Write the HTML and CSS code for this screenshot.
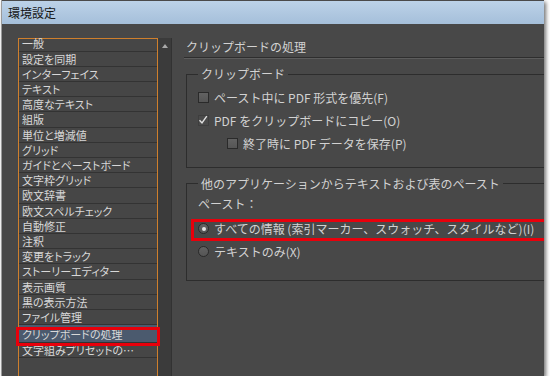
FILE: index.html
```html
<!DOCTYPE html>
<html lang="ja">
<head>
    <meta charset="UTF-8">
    <title>環境設定</title>
    <link rel="stylesheet" href="styles.css">
</head>
<body>

<div class="window">
    <div class="titlebar">環境設定</div>
    <div class="content">
        <div class="side">
            <div class="list">
                <ul>
                    <li>一般</li>
                    <li>設定を同期</li>
                    <li>インターフェイス</li>
                    <li>テキスト</li>
                    <li>高度なテキスト</li>
                    <li>組版</li>
                    <li>単位と増減値</li>
                    <li>グリッド</li>
                    <li>ガイドとペーストボード</li>
                    <li>文字枠グリッド</li>
                    <li>欧文辞書</li>
                    <li>欧文スペルチェック</li>
                    <li>自動修正</li>
                    <li>注釈</li>
                    <li>変更をトラック</li>
                    <li>ストーリーエディター</li>
                    <li>表示画質</li>
                    <li>黒の表示方法</li>
                    <li>ファイル管理</li>
                    <li class="sel">クリップボードの処理</li>
                    <li>文字組みプリセットの…</li>
                </ul>
            </div>
            <div class="scroll"><span class="arrow"></span></div>
        </div>

        <div class="main">
            <h1>クリップボードの処理</h1>

            <fieldset class="group first">
                <legend>クリップボード</legend>
                <div class="row"><span class="box"></span>ペースト中に PDF 形式を優先(F)</div>
                <div class="row"><span class="box checked"><svg width="10" height="10" viewBox="0 0 10 10"><path d="M1.5 5.2 L4 8 L8.8 1.2" fill="none" stroke="#e0e0e0" stroke-width="1.4"/></svg></span>PDF をクリップボードにコピー(O)</div>
                <div class="row indent"><span class="box"></span>終了時に PDF データを保存(P)</div>
            </fieldset>

            <fieldset class="group second">
                <legend>他のアプリケーションからテキストおよび表のペースト</legend>
                <div class="caption">ペースト：</div>
                <div class="row marked"><span class="radio on"></span>すべての情報 (索引マーカー、スウォッチ、スタイルなど)(I)</div>
                <div class="row"><span class="radio"></span>テキストのみ(X)</div>
            </fieldset>
        </div>
    </div>
</div>

</body>
</html>
```

FILE: styles.css
```css
html { background: #fff; }
body { margin: 0; font-family: "Noto Sans CJK JP", sans-serif; font-size: 12px; }

.window { width: 542px; height: 376px; margin-left: 1px; border-left: 1px solid #9a9a9a; overflow: hidden; box-shadow: 2px 2px 4px rgba(0,0,0,0.55); }
.titlebar { height: 23px; line-height: 23px; border-top: 1px solid #4a4a4a; padding-left: 6px; color: #161616; background: linear-gradient(#bcd2e8, #a5bfda); }

.content { display: flex; height: 352px; background: #484848; }

.side { display: flex; padding: 14px 0 0 16px; }
.list { width: 138px; border: 1px solid #cf7f2c; border-bottom: none; background: #464646; }
.list ul { list-style: none; margin: 0; padding: 0; }
.list li { height: 14.2px; line-height: 14.2px; border-bottom: 1px solid #333; padding-left: 3px; font-size: 11px; color: #d8d8d8; font-feature-settings: "palt"; white-space: nowrap; }
.list li:first-child { height: 11.7px; line-height: 9.5px; }
.list li.sel { position: relative; height: 17px; line-height: 19px; background: #4b5a6e; }
.list li.sel::after { content: ""; position: absolute; left: -3px; right: -3px; top: 2px; bottom: -4px; border: 3px solid #e8000b; }

.scroll { width: 13px; background: #3b3b3b; border-right: 1px solid #323232; }
.arrow { display: block; width: 0; height: 0; margin: 6px auto 0; border-left: 3px solid transparent; border-right: 3px solid transparent; border-bottom: 4px solid #a8a8a8; }

.main { flex: 1; padding: 15px 0 0 12px; color: #d2d2d2; min-width: 0; }
.main h1 { margin: 0 0 8px; font-size: 12px; font-weight: normal; line-height: 16px; padding: 0 0 2px 2px; border-bottom: 1px solid #2e2e2e; box-shadow: 0 1px 0 #5c5c5c; }

.group { margin: 0 0 0 2px; width: 400px; padding: 0 0 0 11px; border: 1px solid #2d2d2d; }
.group legend { padding: 0 3px; line-height: 16px; }
.group.first { padding-bottom: 12px; }
.group.first .row:first-of-type { margin-top: 3.5px; }
.group.second { margin-top: 8px; padding-bottom: 17px; }

.row { position: relative; display: flex; align-items: center; height: 23px; white-space: nowrap; }
.row.indent { margin-left: 29px; }
.caption { margin-top: 4px; line-height: 16px; }
.caption + .row { margin-top: 5.5px; }
.row.marked::after { content: ""; position: absolute; left: -7px; right: -40px; top: 1.5px; bottom: -1px; border: 3px solid #e8000b; }

.box { width: 9px; height: 9px; margin-right: 5px; border: 1px solid #2a2a2a; background: linear-gradient(#626262, #555); }
.box.checked { border-color: #3e3e3e; background: #4a4a4a; }
.box svg { display: block; margin: -1px 0 0 -1px; }
.radio { position: relative; width: 9px; height: 9px; margin-right: 5px; border: 1px solid #2a2a2a; border-radius: 50%; background: linear-gradient(#626262, #555); }
.radio.on::after { content: ""; position: absolute; left: 2.5px; top: 2.5px; width: 4px; height: 4px; border-radius: 50%; background: #e4e4e4; }
```
